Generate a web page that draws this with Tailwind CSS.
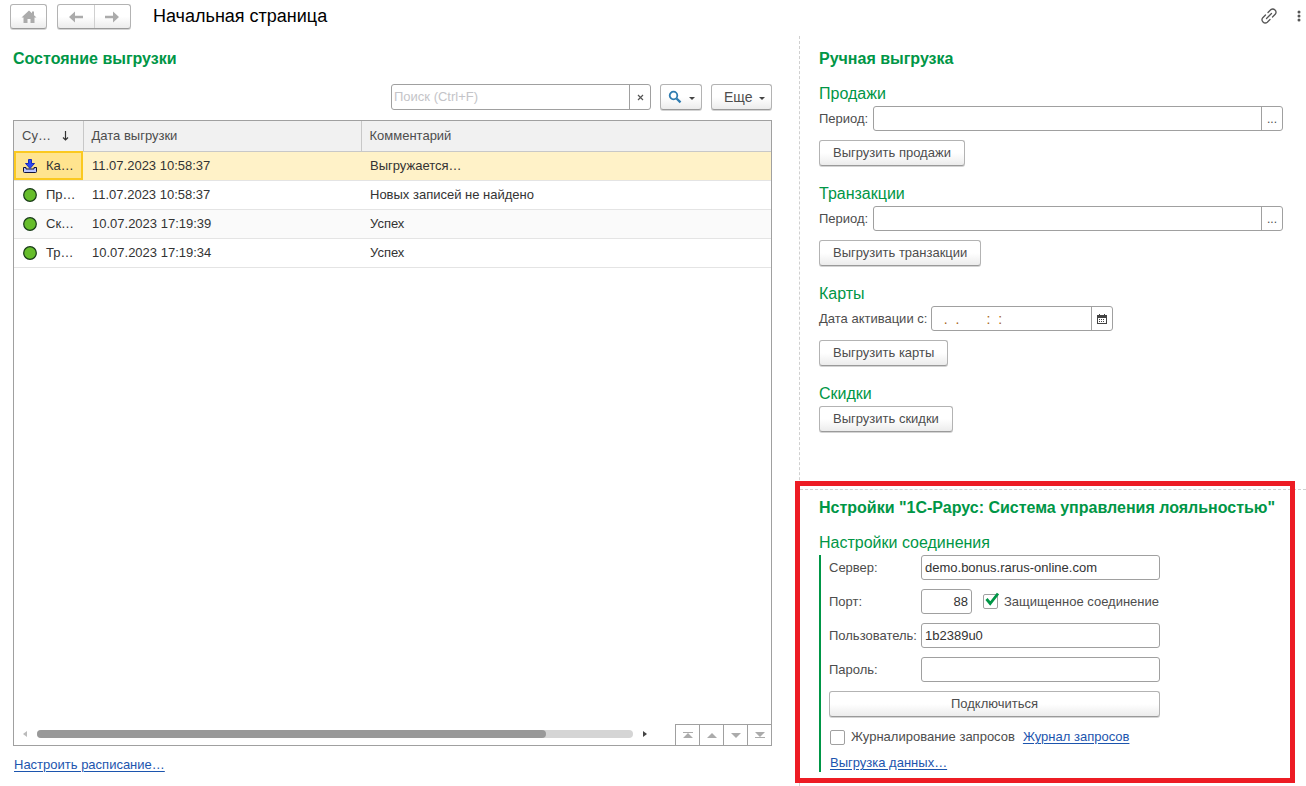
<!DOCTYPE html>
<html lang="ru">
<head>
<meta charset="utf-8">
<meta name="viewport" content="width=device-width, initial-scale=1">
<title>Начальная страница</title>
<script src="https://cdn.jsdelivr.net/npm/@tailwindcss/browser@4"></script>
</head>
<body class="min-h-screen flex flex-col overflow-x-hidden bg-white font-['Liberation_Sans',Arial,sans-serif] text-[13px] leading-5 text-[#4d4d4d]">
<header class="flex h-9 shrink-0 items-start pt-1 pl-[10px] pr-px">
  <button type="button" aria-label="Домой" class="flex h-[25px] w-[37px] items-center justify-center rounded-[3px] border border-[#b3b3b3] border-b-[#9a9a9a] bg-linear-to-b from-white from-50% to-[#ececec] shadow-[0_1px_0_#d4d4d4]">
    <svg class="h-[14px] w-4" viewBox="0 0 16 14" fill="#ababab"><path d="M8 0.500 0.500 7.500h2V13h4V9h3v4h4V7.500h2L13 5.200V1.500h-2v1.800z"/></svg>
  </button>
  <div class="ml-[10px] flex h-[25px] w-[74px] rounded-[3px] border border-[#b3b3b3] border-b-[#9a9a9a] bg-linear-to-b from-white from-50% to-[#ececec] shadow-[0_1px_0_#d4d4d4]">
    <button type="button" aria-label="Назад" class="flex flex-1 items-center justify-center border-r border-[#d0d0d0]">
      <svg class="h-3 w-4" viewBox="0 0 16 12" fill="#ababab"><path d="M1 6 7 0.500v4.300h8v2.400H7v4.300z"/></svg>
    </button>
    <button type="button" aria-label="Вперед" class="flex flex-1 items-center justify-center">
      <svg class="h-3 w-4" viewBox="0 0 16 12" fill="#ababab"><path d="M15 6 9 0.500v4.300H1v2.400h8v4.300z"/></svg>
    </button>
  </div>
  <h1 class="ml-[22px] text-lg leading-6 text-black">Начальная страница</h1>
  <button type="button" aria-label="Получить ссылку" class="ml-auto flex h-6 w-5 items-center justify-center">
    <svg class="h-[18px] w-[18px]" viewBox="0 0 18 18" fill="none" stroke="#555" stroke-width="1.300" stroke-linecap="round"><path d="M6.500 11.500l5-5M8 5.500l2.700-2.700a3.200 3.200 0 0 1 4.500 4.500L12.500 10M10 12.500l-2.700 2.700a3.200 3.200 0 0 1-4.500-4.500L5.500 8"/></svg>
  </button>
  <button type="button" aria-label="Меню" class="ml-[14px] flex h-6 w-3 items-center justify-center">
    <svg class="h-3 w-1" viewBox="0 0 4 12" fill="#555"><circle cx="2" cy="2" r="1.500"/><circle cx="2" cy="6" r="1.500"/><circle cx="2" cy="10" r="1.500"/></svg>
  </button>
</header>

<main class="grid flex-1 grid-cols-[799fr_507fr]">
  <section class="flex min-w-0 flex-col pl-[13px] pr-[27px] pt-[13px]">
    <h2 class="text-base font-bold leading-5 text-[#009646]">Состояние выгрузки</h2>
    <div class="mt-[15px] flex justify-end">
      <div class="flex h-[26px] w-[260px] rounded-[3px] border border-[#a0a0a0]">
        <input type="text" aria-label="Поиск" placeholder="Поиск (Ctrl+F)" class="min-w-0 flex-1 pl-[2px] text-[13px] outline-none placeholder:text-[#c4c4c8]">
        <button type="button" aria-label="Очистить" class="flex w-[21px] items-center justify-center border-l border-[#a0a0a0]">
          <svg class="h-[7px] w-[7px]" viewBox="0 0 7 7" stroke="#555" stroke-width="1.200"><path d="M1 1l5 5M6 1L1 6"/></svg>
        </button>
      </div>
      <button type="button" aria-label="Найти" class="ml-[9px] flex h-[26px] w-[42px] items-center rounded-[3px] border border-[#b3b3b3] border-b-[#9a9a9a] bg-linear-to-b from-white from-50% to-[#ececec] pl-[7px] shadow-[0_1px_0_#d4d4d4]">
        <svg class="h-[14px] w-[14px]" viewBox="0 0 14 14" fill="none" stroke="#2f7cb0"><circle cx="5.500" cy="5.500" r="3.800" stroke-width="1.800"/><path d="M8.500 8.500l4 3.800" stroke-width="2.400"/></svg>
        <svg class="ml-[7px] mt-[2px] h-[3px] w-[6px]" viewBox="0 0 6 3" fill="#444"><path d="M0 0h6L3 3z"/></svg>
      </button>
      <button type="button" class="ml-[9px] flex h-[26px] w-[61px] items-center rounded-[3px] border border-[#b3b3b3] border-b-[#9a9a9a] bg-linear-to-b from-white from-50% to-[#ececec] pl-3 text-sm shadow-[0_1px_0_#d4d4d4]">Еще
        <svg class="ml-[6px] mt-[2px] h-[3px] w-[6px]" viewBox="0 0 6 3" fill="#444"><path d="M0 0h6L3 3z"/></svg>
      </button>
    </div>

    <div class="mt-[10px] flex flex-1 flex-col border border-[#a0a0a0]">
      <table class="w-full table-fixed border-collapse text-left">
        <colgroup><col class="w-[69px]"><col class="w-[278px]"><col></colgroup>
        <thead>
          <tr class="h-[30px] border-b border-[#c8c8c8] bg-[#f1f1f1]">
            <th scope="col" class="border-r border-[#c8c8c8] pl-2 font-normal"><span class="flex items-center">Су…<svg class="ml-[11px] h-[10px] w-[7px]" viewBox="0 0 7 10" fill="none" stroke="#333" stroke-width="1.200"><path d="M3.500 0v9M1 6.500l2.500 2.500L6 6.500"/></svg></span></th>
            <th scope="col" class="border-r border-[#c8c8c8] pl-2 font-normal">Дата выгрузки</th>
            <th scope="col" class="pl-2 font-normal">Комментарий</th>
          </tr>
        </thead>
        <tbody class="text-[#333]">
          <tr class="h-[29px] border-b border-[#e4e4e4] bg-[#fff2c8]">
            <td class="bg-[#ffe48f] pl-2 outline-2 -outline-offset-2 outline-[#fbc920]"><span class="flex items-center"><svg class="mr-2 h-4 w-4" viewBox="0 0 16 16" stroke="#10103c"><path d="M1.500 9.500v4q0 1 1 1h11q1 0 1-1v-4h-2.500v1.500h-8V9.500z" fill="#b9c4ff"/><path d="M6.500 1.500h3v4h3L8 10.500 3.500 5.500h3z" fill="#2c48f5" stroke="#1a2bb8"/></svg>Ка…</span></td>
            <td class="pl-[9px]">11.07.2023 10:58:37</td><td class="pl-[9px]">Выгружается…</td>
          </tr>
          <tr class="h-[29px] border-b border-[#e4e4e4]">
            <td class="pl-2"><span class="flex items-center"><svg class="mr-2 h-4 w-4" viewBox="0 0 16 16"><circle cx="8" cy="8" r="6.300" fill="#66bd2b" stroke="#173a17" stroke-width="1.200"/></svg>Пр…</span></td>
            <td class="pl-[9px]">11.07.2023 10:58:37</td><td class="pl-[9px]">Новых записей не найдено</td>
          </tr>
          <tr class="h-[29px] border-b border-[#e4e4e4] bg-[#fafafa]">
            <td class="pl-2"><span class="flex items-center"><svg class="mr-2 h-4 w-4" viewBox="0 0 16 16"><circle cx="8" cy="8" r="6.300" fill="#66bd2b" stroke="#173a17" stroke-width="1.200"/></svg>Ск…</span></td>
            <td class="pl-[9px]">10.07.2023 17:19:39</td><td class="pl-[9px]">Успех</td>
          </tr>
          <tr class="h-[29px] border-b border-[#e4e4e4]">
            <td class="pl-2"><span class="flex items-center"><svg class="mr-2 h-4 w-4" viewBox="0 0 16 16"><circle cx="8" cy="8" r="6.300" fill="#66bd2b" stroke="#173a17" stroke-width="1.200"/></svg>Тр…</span></td>
            <td class="pl-[9px]">10.07.2023 17:19:34</td><td class="pl-[9px]">Успех</td>
          </tr>
        </tbody>
      </table>
      <div class="mt-auto flex h-[21px] items-end">
        <div class="flex h-[22px] flex-1 items-center pl-[9px] pr-7">
          <svg class="h-[6px] w-1" viewBox="0 0 4 6" fill="#bbb"><path d="M4 0v6L0 3z"/></svg>
          <div class="ml-[10px] mr-[10px] h-2 flex-1 rounded-full bg-[#d5d5d5]"><div class="h-2 rounded-full bg-[#999]" style="width:85.4%"></div></div>
          <svg class="h-[6px] w-1" viewBox="0 0 4 6" fill="#444"><path d="M0 0v6l4-3z"/></svg>
        </div>
        <div class="flex h-[21px] w-24 divide-x divide-[#a0a0a0] border-l border-t border-[#a0a0a0]">
          <button type="button" aria-label="В начало" class="flex flex-1 items-center justify-center"><svg class="h-[6px] w-[10px]" viewBox="0 0 10 6" fill="#ababab"><path d="M0 0h10v1H0zM5 1l5 5H0z"/></svg></button>
          <button type="button" aria-label="Вверх" class="flex flex-1 items-center justify-center"><svg class="h-[5px] w-[10px]" viewBox="0 0 10 5" fill="#ababab"><path d="M5 0l5 5H0z"/></svg></button>
          <button type="button" aria-label="Вниз" class="flex flex-1 items-center justify-center"><svg class="h-[5px] w-[10px]" viewBox="0 0 10 5" fill="#ababab"><path d="M5 5l5-5H0z"/></svg></button>
          <button type="button" aria-label="В конец" class="flex flex-1 items-center justify-center"><svg class="h-[6px] w-[10px]" viewBox="0 0 10 6" fill="#ababab"><path d="M0 5h10v1H0zM5 5l5-5H0z"/></svg></button>
        </div>
      </div>
    </div>
    <p class="mb-[11px] mt-[9px] pl-px"><a href="#" class="text-[#1c55ae] underline underline-offset-2">Настроить расписание…</a></p>
  </section>

  <div class="flex min-w-0 flex-col border-l border-dashed border-[#d0d0d0]">
    <section class="flex-1 pl-[19px] pr-[23px] pt-[13px]">
      <h2 class="text-base font-bold leading-5 text-[#009646]">Ручная выгрузка</h2>

      <h3 class="mb-[2px] mt-[15px] text-base leading-5 text-[#009646]">Продажи</h3>
      <div class="flex items-center">
        <label for="sales" class="w-[54px] shrink-0">Период:</label>
        <div class="flex h-[25px] min-w-0 flex-1 rounded-[3px] border border-[#a0a0a0]">
          <input id="sales" type="text" class="min-w-0 flex-1 px-[3px] outline-none">
          <button type="button" aria-label="Выбрать период продаж" class="w-[21px] border-l border-[#a0a0a0] text-xs leading-5">...</button>
        </div>
      </div>
      <button type="button" class="mt-[9px] block h-[26px] rounded-[3px] border border-[#b3b3b3] border-b-[#9a9a9a] bg-linear-to-b from-white from-50% to-[#ececec] px-[13px] shadow-[0_1px_0_#d4d4d4]">Выгрузить продажи</button>

      <h3 class="mb-[2px] mt-[18px] text-base leading-5 text-[#009646]">Транзакции</h3>
      <div class="flex items-center">
        <label for="trans" class="w-[54px] shrink-0">Период:</label>
        <div class="flex h-[25px] min-w-0 flex-1 rounded-[3px] border border-[#a0a0a0]">
          <input id="trans" type="text" class="min-w-0 flex-1 px-[3px] outline-none">
          <button type="button" aria-label="Выбрать период транзакций" class="w-[21px] border-l border-[#a0a0a0] text-xs leading-5">...</button>
        </div>
      </div>
      <button type="button" class="mt-[9px] block h-[26px] rounded-[3px] border border-[#b3b3b3] border-b-[#9a9a9a] bg-linear-to-b from-white from-50% to-[#ececec] px-[13px] shadow-[0_1px_0_#d4d4d4]">Выгрузить транзакции</button>

      <h3 class="mb-[2px] mt-[18px] text-base leading-5 text-[#009646]">Карты</h3>
      <div class="flex items-center">
        <label for="cards" class="w-28 shrink-0 whitespace-nowrap">Дата активации с:</label>
        <div class="flex h-[25px] w-[182px] rounded-[3px] border border-[#a0a0a0]">
          <input id="cards" type="text" value="  .  .       :  :  " class="min-w-0 flex-1 px-1 text-sm text-[#a8651c] outline-none">
          <button type="button" aria-label="Календарь" class="flex w-[21px] items-center justify-center border-l border-[#a0a0a0]">
            <svg class="h-[10px] w-[10px]" viewBox="0 0 10 10" fill="#444"><path d="M0 1h2V0h1v1h4V0h1v1h2v9H0zM1 4v5h8V4z" fill-rule="evenodd"/><path d="M2 5h1v1H2zM4 5h1v1H4zM6 5h1v1H6zM2 7h1v1H2zM4 7h1v1H4zM6 7h1v1H6z"/></svg>
          </button>
        </div>
      </div>
      <button type="button" class="mt-[9px] block h-[26px] rounded-[3px] border border-[#b3b3b3] border-b-[#9a9a9a] bg-linear-to-b from-white from-50% to-[#ececec] px-[13px] shadow-[0_1px_0_#d4d4d4]">Выгрузить карты</button>

      <h3 class="mb-[2px] mt-[18px] text-base leading-5 text-[#009646]">Скидки</h3>
      <button type="button" class="block h-[26px] rounded-[3px] border border-[#b3b3b3] border-b-[#9a9a9a] bg-linear-to-b from-white from-50% to-[#ececec] px-[13px] shadow-[0_1px_0_#d4d4d4]">Выгрузить скидки</button>
    </section>

    <section class="relative border-t border-dashed border-[#d0d0d0] pb-[14px] pl-[19px] pt-2">
      <div class="pointer-events-none absolute -left-[5px] -top-[9px] bottom-[3px] right-[11px] border-5 border-[#ed1c24]"></div>
      <h2 class="whitespace-nowrap text-base font-bold leading-5 text-[#009646]">Нстройки "1С-Рарус: Система управления лояльностью"</h2>
      <h3 class="mb-[2px] mt-[15px] text-base leading-5 text-[#009646]">Настройки соединения</h3>
      <div class="border-l-2 border-[#009646] pl-2">
        <div class="grid w-[331px] grid-cols-[92px_1fr] items-center gap-y-[9px]">
          <label for="server">Сервер:</label>
          <input id="server" type="text" value="demo.bonus.rarus-online.com" class="h-[25px] w-full rounded-[3px] border border-[#a0a0a0] px-[3px] text-[#333] outline-none">
          <label for="port">Порт:</label>
          <div class="flex items-center">
            <input id="port" type="text" value="88" class="h-[25px] w-[51px] rounded-[3px] border border-[#a0a0a0] px-[3px] text-right text-[#333] outline-none">
            <label class="ml-[11px] flex items-center gap-[6px] whitespace-nowrap">
              <span class="relative h-[15px] w-[15px]">
                <input type="checkbox" checked class="peer block h-[15px] w-[15px] appearance-none rounded-[2px] border border-[#a0a0a0]">
                <svg class="pointer-events-none absolute -top-[2px] left-[2px] hidden h-[14px] w-[14px] peer-checked:block" viewBox="0 0 14 14" fill="none" stroke="#009646" stroke-width="2.800"><path d="M1.500 7l3.700 4.500L13 1.500"/></svg>
              </span>Защищенное соединение</label>
          </div>
          <label for="user">Пользователь:</label>
          <input id="user" type="text" value="1b2389u0" class="h-[25px] w-full rounded-[3px] border border-[#a0a0a0] px-[3px] text-[#333] outline-none">
          <label for="pass">Пароль:</label>
          <input id="pass" type="password" class="h-[25px] w-full rounded-[3px] border border-[#a0a0a0] px-[3px] outline-none">
          <button type="button" class="col-span-2 h-[26px] rounded-[3px] border border-[#b3b3b3] border-b-[#9a9a9a] bg-linear-to-b from-white from-50% to-[#ececec] shadow-[0_1px_0_#d4d4d4]">Подключиться</button>
        </div>
        <div class="mt-[10px] flex items-center gap-2 pl-px">
          <label class="flex items-center gap-[6px]"><input type="checkbox" class="h-[15px] w-[15px] appearance-none rounded-[2px] border border-[#a0a0a0]">Журналирование запросов</label>
          <a href="#" class="text-[#1c55ae] underline underline-offset-2">Журнал запросов</a>
        </div>
        <p class="mt-[7px] pl-px leading-[18px]"><a href="#" class="text-[#1c55ae] underline underline-offset-2">Выгрузка данных…</a></p>
      </div>
    </section>
  </div>
</main>
</body>
</html>
